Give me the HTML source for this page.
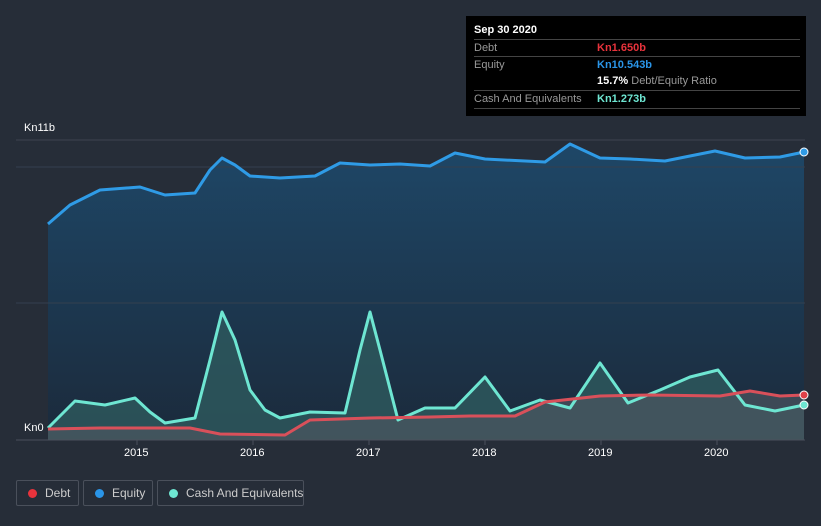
<!DOCTYPE html>
<html><head><style>
html,body{margin:0;background:#262d38;width:821px;height:526px;overflow:hidden;font-family:"Liberation Sans",sans-serif;position:relative}
.tt{position:absolute;left:466px;top:16px;width:340px;height:100px;background:#000;color:#fff;font-size:11px}
.tt .r{position:absolute;left:8px;width:326px;border-top:1px solid #444;height:17px;line-height:17px;color:#999}
.tt b{position:absolute;left:123px;white-space:nowrap}
.leg{position:absolute;top:480px;height:26px;border:1px solid #4a505b;border-radius:2px;color:#ccc;font-size:12px;line-height:24px;box-sizing:border-box;white-space:nowrap}
.leg i{position:absolute;left:11px;top:8px;width:9px;height:9px;border-radius:50%}
.leg span{position:absolute;left:28px}
.ax{position:absolute;color:#fff;font-size:11px}
</style></head><body>
<svg width="821" height="526" style="position:absolute;left:0;top:0">
<defs>
<linearGradient id="eq" x1="0" y1="0" x2="0" y2="1"><stop offset="0" stop-color="#1e4767"/><stop offset="1" stop-color="#1b2a3b"/></linearGradient>
</defs>
<line x1="16" y1="140" x2="805" y2="140" stroke="#3d4450"/>
<path d="M48,224 L70,205 L100,190 L140,187 L165,195 L195,193 L210,170 L222,158 L235,165 L250,176 L280,178 L315,176 L340,163 L370,165 L400,164 L430,166 L455,153 L485,159 L545,162 L570,144 L600,158 L630,159 L665,161 L715,151 L745,158 L780,157 L804,152 L804,440 L48,440Z" fill="url(#eq)"/>
<line x1="16" y1="167" x2="805" y2="167" stroke="#34404f"/>
<line x1="16" y1="303" x2="805" y2="303" stroke="#34404f"/>
<path d="M48,428 L75,401 L105,405 L135,398 L150,412 L165,423 L195,418 L210,360 L222,312 L235,340 L250,390 L265,410 L280,418 L310,412 L345,413 L360,350 L370,312 L380,350 L398,420 L425,408 L455,408 L485,377 L510,411 L540,400 L570,408 L600,363 L628,403 L660,390 L690,377 L718,370 L745,405 L775,411 L804,405 L804,440 L48,440Z" fill="#2e5a5e" opacity="0.8"/>
<path d="M48,429 L100,428 L190,428 L220,434 L285,435 L310,420 L370,418 L430,417 L470,416 L515,416 L545,402 L600,396 L650,395 L720,396 L750,391 L780,396 L804,395 L804,440 L48,440Z" fill="#4b5560" opacity="0.7"/>
<path d="M48,224 L70,205 L100,190 L140,187 L165,195 L195,193 L210,170 L222,158 L235,165 L250,176 L280,178 L315,176 L340,163 L370,165 L400,164 L430,166 L455,153 L485,159 L545,162 L570,144 L600,158 L630,159 L665,161 L715,151 L745,158 L780,157 L804,152" fill="none" stroke="#2f9be6" stroke-width="3" stroke-linejoin="round"/>
<path d="M48,428 L75,401 L105,405 L135,398 L150,412 L165,423 L195,418 L210,360 L222,312 L235,340 L250,390 L265,410 L280,418 L310,412 L345,413 L360,350 L370,312 L380,350 L398,420 L425,408 L455,408 L485,377 L510,411 L540,400 L570,408 L600,363 L628,403 L660,390 L690,377 L718,370 L745,405 L775,411 L804,405" fill="none" stroke="#6ee6d2" stroke-width="3" stroke-linejoin="round"/>
<path d="M48,429 L100,428 L190,428 L220,434 L285,435 L310,420 L370,418 L430,417 L470,416 L515,416 L545,402 L600,396 L650,395 L720,396 L750,391 L780,396 L804,395" fill="none" stroke="#d9505a" stroke-width="3" stroke-linejoin="round"/>
<line x1="16" y1="440" x2="805" y2="440" stroke="#4a505b"/>
<g stroke="#4a505b"><line x1="137" y1="440" x2="137" y2="445"/><line x1="253" y1="440" x2="253" y2="445"/><line x1="369" y1="440" x2="369" y2="445"/><line x1="485" y1="440" x2="485" y2="445"/><line x1="601" y1="440" x2="601" y2="445"/><line x1="717" y1="440" x2="717" y2="445"/></g>
<circle cx="804" cy="152" r="4" fill="#2f9be6" stroke="#fff" stroke-width="1"/>
<circle cx="804" cy="405" r="4" fill="#6ee6d2" stroke="#fff" stroke-width="1"/>
<circle cx="804" cy="395" r="4" fill="#e04048" stroke="#fff" stroke-width="1"/>
</svg>
<div class="ax" style="left:24px;top:122px">Kn11b</div>
<div class="ax" style="left:24px;top:422px">Kn0</div>
<div class="ax" style="left:124px;top:447px">2015</div>
<div class="ax" style="left:240px;top:447px">2016</div>
<div class="ax" style="left:356px;top:447px">2017</div>
<div class="ax" style="left:472px;top:447px">2018</div>
<div class="ax" style="left:588px;top:447px">2019</div>
<div class="ax" style="left:704px;top:447px">2020</div>
<div class="tt">
<div style="position:absolute;left:8px;top:8px;font-weight:bold">Sep 30 2020</div>
<div class="r" style="top:23px">Debt<b style="color:#e8333c">Kn1.650b</b></div>
<div class="r" style="top:40px">Equity<b style="color:#2a95e8">Kn10.543b</b></div>
<div class="r" style="top:57px;border-top:none"><b style="color:#fff">15.7% <span style="color:#999;font-weight:normal">Debt/Equity Ratio</span></b></div>
<div class="r" style="top:74px;border-bottom:1px solid #444">Cash And Equivalents<b style="color:#6ee6d2">Kn1.273b</b></div>
</div>
<div class="leg" style="left:16px;width:63px"><i style="background:#e8333c"></i><span>Debt</span></div>
<div class="leg" style="left:83px;width:70px"><i style="background:#2a95e8"></i><span>Equity</span></div>
<div class="leg" style="left:157px;width:147px"><i style="background:#6ee6d2"></i><span>Cash And Equivalents</span></div>
</body></html>
